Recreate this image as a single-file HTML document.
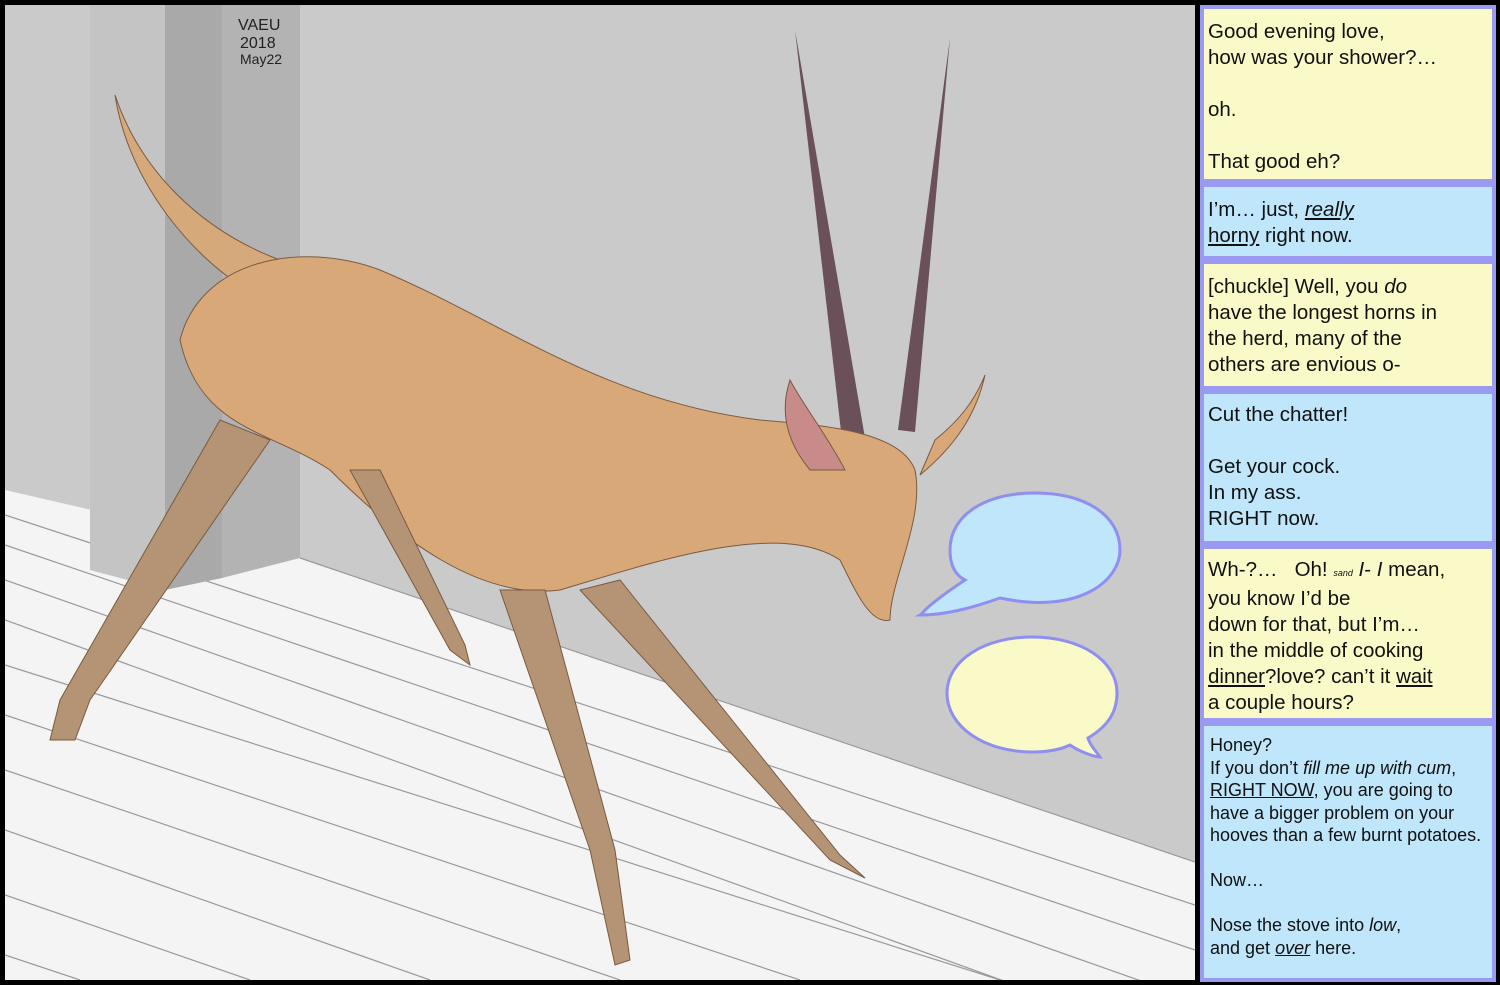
<!DOCTYPE html>
<html><head><meta charset="utf-8">
<style>
html,body{margin:0;padding:0;background:#000;overflow:hidden;width:1500px;height:985px;}
body{position:relative;font-family:"Liberation Sans",sans-serif;}
#art{position:absolute;left:5px;top:5px;width:1190px;height:975px;display:block;}
.box{position:absolute;left:1200px;width:296px;border:4px solid #9a9af2;padding:0 0 0 4px;font-size:20.5px;line-height:26px;color:#111;box-sizing:border-box;overflow:hidden;}
.y{background:#fafac8;}
.b{background:#bfe6fa;}
u{text-decoration:underline;}
</style></head><body>
<svg id="art" width="1190" height="975" viewBox="5 5 1190 975">
<rect x="5" y="5" width="1190" height="975" fill="#f4f4f4"/>
<polygon points="5,5 1195,5 1195,862 300,558 5,490" fill="#cacaca"/>
<g stroke="#9a9a9a" stroke-width="1.2">
<line x1="5" y1="515" x2="1195" y2="905"/>
<line x1="5" y1="545" x2="1195" y2="950"/>
<line x1="5" y1="580" x2="1195" y2="1000"/>
<line x1="5" y1="620" x2="1195" y2="1050"/>
<line x1="5" y1="665" x2="1000" y2="980"/>
<line x1="5" y1="715" x2="800" y2="980"/>
<line x1="5" y1="770" x2="620" y2="980"/>
<line x1="5" y1="830" x2="430" y2="980"/>
<line x1="5" y1="895" x2="250" y2="980"/>
<line x1="5" y1="955" x2="80" y2="980"/>
<line x1="300" y1="558" x2="1195" y2="862"/>
</g>
<polygon points="90,5 165,5 165,590 90,570" fill="#c4c4c4"/>
<polygon points="165,5 222,5 222,578 165,590" fill="#a9a9a9"/>
<polygon points="222,5 300,5 300,558 222,578" fill="#b3b3b3"/>
<text x="238" y="30" font-size="16" fill="#222" font-family="Liberation Sans">VAEU</text>
<text x="240" y="48" font-size="16" fill="#222" font-family="Liberation Sans">2018</text>
<text x="240" y="64" font-size="14" fill="#222" font-family="Liberation Sans">May22</text>
<path d="M795,30 L842,440 L865,438 Z" fill="#6a5058"/>
<path d="M950,38 L898,430 L915,432 Z" fill="#6a5058"/>
<path d="M115,95 C130,190 200,260 240,285 L280,260 C200,230 140,170 115,95 Z" fill="#d6a97a" stroke="#7a5a40"/>
<path d="M180,340 C200,260 300,240 380,270 C500,320 600,400 760,420 C820,425 900,430 915,470 C925,520 890,580 890,620 C870,625 855,590 840,560 C780,520 660,560 560,590 C480,600 400,540 330,470 C270,430 200,430 180,340 Z" fill="#d9a878" stroke="#7a5a40"/>
<path d="M790,380 C800,400 830,440 845,470 L810,470 C785,440 780,410 790,380 Z" fill="#c98a8a" stroke="#7a5a40"/>
<path d="M985,375 C975,420 950,450 920,475 L935,440 C960,420 975,400 985,375 Z" fill="#d9a878" stroke="#7a5a40"/>
<path d="M220,420 L60,700 L50,740 L75,740 L90,700 L270,440 Z" fill="#b59475" stroke="#7a5a40"/>
<path d="M350,470 L450,650 L470,665 L465,645 L380,470 Z" fill="#b59475" stroke="#7a5a40"/>
<path d="M500,590 L590,850 L615,965 L630,960 L615,850 L545,590 Z" fill="#b59475" stroke="#7a5a40"/>
<path d="M580,590 L830,860 L865,878 L840,855 L620,580 Z" fill="#b59475" stroke="#7a5a40"/>
<path d="M965,580 C920,610 925,612 920,615 C950,615 980,605 1000,598 C1080,615 1120,580 1120,550 C1120,515 1085,493 1035,493 C985,493 950,515 950,550 C950,565 955,575 965,580 Z" fill="#bfe6fa" stroke="#8f8ff0" stroke-width="3"/>
<path d="M1070,745 C1080,752 1095,757 1100,757 C1095,750 1090,745 1088,738 C1110,725 1117,710 1117,693 C1117,660 1080,637 1032,637 C985,637 947,660 947,693 C947,727 985,752 1032,752 C1045,752 1060,750 1070,745 Z" fill="#fafac8" stroke="#8f8ff0" stroke-width="3"/>
</svg>
<div class="box y" style="top:5px;height:178px;padding-top:10px">Good evening love,<br>how was your shower?…<br><br>oh.<br><br>That good eh?</div>
<div class="box b" style="top:183px;height:77px;padding-top:10px">I’m… just, <i><u>really</u></i><br><u>horny</u> right now.</div>
<div class="box y" style="top:260px;height:130px;padding-top:10px">[chuckle] Well, you <i>do</i><br>have the longest horns in<br>the herd, many of the<br>others are envious o-</div>
<div class="box b" style="top:390px;height:155px;padding-top:8px">Cut the chatter!<br><br>Get your cock.<br>In my ass.<br>RIGHT now.</div>
<div class="box y" style="top:545px;height:177px;padding-top:8px">Wh-?…&nbsp;&nbsp; Oh! <span style="font-size:9px;font-style:italic">sand</span> <i>I</i>- <i>I</i> mean,<br>you know I’d be<br>down for that, but I’m…<br>in the middle of cooking<br><u>dinner</u>?love? can’t it <u>wait</u><br>a couple hours?</div>
<div class="box b" style="top:722px;height:260px;padding:8px 0 0 6px;font-size:18px;line-height:22.5px">Honey?<br>If you don’t <i>fill me up with cum</i>,<br><u>RIGHT NOW</u>, you are going to<br>have a bigger problem on your<br>hooves than a few burnt potatoes.<br><br>Now…<br><br>Nose the stove into <i>low</i>,<br>and get <i><u>over</u></i> here.</div>
</body></html>
